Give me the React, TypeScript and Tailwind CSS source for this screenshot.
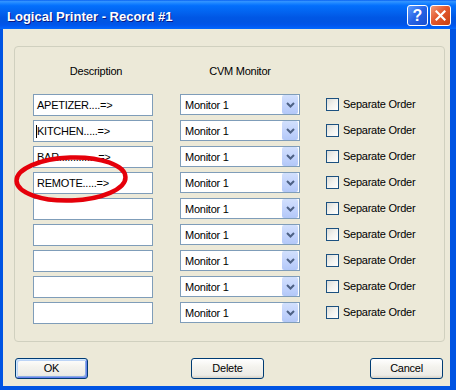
import React from "react";

function Chevron() {
  return (
    <svg width="9" height="6" viewBox="0 0 9 6">
      <polyline points="1,1 4.5,4.5 8,1" fill="none" stroke="#4D6185" strokeWidth="2" />
    </svg>
  );
}

function Button({ label, isDefault, className }: { label: string; isDefault?: boolean; className?: string }) {
  return (
    <div
      className={
        "w-[73px] h-[21px] border border-[#003C74] rounded-[3px] bg-[linear-gradient(to_bottom,#FFFFFF_0%,#F4F3EE_40%,#ECEBE6_85%,#D6D0C5_100%)] flex items-center justify-center text-[11px] tracking-[-0.25px] text-black " +
        (isDefault
          ? "shadow-[inset_1px_1px_0_#CEE7FF,inset_-1px_-1px_0_#6982EE,inset_2px_2px_0_#BCD4F6,inset_-2px_-2px_0_#89ADE4] "
          : "") +
        (className ?? "")
      }
    >
      {label}
    </div>
  );
}

export default function App() {
  const rows = [
    "APETIZER....=>",
    "KITCHEN.....=>",
    "BAR..............=>",
    "REMOTE.....=>",
    "",
    "",
    "",
    "",
    "",
  ];
  return (
    <div className="relative w-[456px] h-[390px] bg-[#0054E3] font-['Liberation_Sans',Arial,sans-serif] overflow-hidden select-none flex flex-col">
      {/* Title bar */}
      <div className="h-[29px] shrink-0 flex items-center pl-[7px] pr-[5px] bg-[linear-gradient(to_bottom,#0058EE_0%,#3593FF_4%,#288EFF_8%,#127DFF_14%,#036FFC_20%,#0262EE_44%,#0057E5_60%,#0054E3_76%,#0055EB_86%,#005BF5_92%,#026AFE_100%)]">
        <span className="pt-[4px] text-[13px] font-bold text-white [text-shadow:1px_1px_0_#0A1883] leading-none">
          Logical Printer - Record #1
        </span>
        <div className="ml-auto flex items-center gap-[2px] mt-[2px]">
          <div className="w-[21px] h-[21px] rounded-[3px] border border-white bg-[linear-gradient(135deg,#5C9BFF_0%,#2663E5_50%,#1A4FD0_100%)] flex items-center justify-center text-white font-bold text-[16px] leading-none">
            ?
          </div>
          <div className="w-[21px] h-[21px] rounded-[3px] border border-white bg-[linear-gradient(135deg,#F29B7A_0%,#E3582E_45%,#C8400F_100%)] flex items-center justify-center">
            <svg width="11" height="11" viewBox="0 0 11 11">
              <path d="M1.5 1.5 L9.5 9.5 M9.5 1.5 L1.5 9.5" stroke="white" strokeWidth="2.2" strokeLinecap="square" />
            </svg>
          </div>
        </div>
      </div>

      {/* Body */}
      <div className="flex-1 ml-[3px] mr-[6px] mb-[4px] bg-[#ECE9D8] flex flex-col text-[11px] tracking-[-0.25px] text-black">
        {/* Group box */}
        <div className="mt-[17px] ml-[11px] w-[431px] h-[296px] border border-[#D0D0BF] rounded-[4px] pt-[17px] pl-[18px]">
          <div className="flex h-[14px] leading-[14px]">
            <div className="w-[120px] pl-[6px] text-center">Description</div>
            <div className="w-[120px] ml-[27px] text-center">CVM Monitor</div>
          </div>
          <div className="mt-[16px] flex flex-col gap-[4px]">
            {rows.map((r, i) => (
              <div key={i} className="flex items-start h-[22px]">
                <div className="relative w-[120px] h-[22px] border border-[#7F9DB9] bg-white pl-[3px] leading-[20px] whitespace-nowrap overflow-hidden">
                  {i === 1 && <span className="absolute left-[2px] top-[4px] w-px h-[13px] bg-black" />}
                  {r}
                </div>
                <div className="ml-[27px] w-[120px] h-[21px] border border-[#7F9DB9] bg-white flex items-center pl-[4px] pr-px">
                  <span className="flex-1 leading-[19px] pt-px">Monitor 1</span>
                  <div className="w-[16px] h-[19px] rounded-[2px] bg-[linear-gradient(to_bottom,#D2E0FD_0%,#C3D4FC_50%,#B3C8F8_100%)] flex items-center justify-center">
                    <Chevron />
                  </div>
                </div>
                <div className="ml-[26px] h-[21px] flex items-center">
                  <div className="w-[13px] h-[13px] border border-[#1C5180] bg-[linear-gradient(135deg,#DCDCD7_0%,#F2F2EE_50%,#FFFFFF_100%)]" />
                  <span className="ml-[4px]">Separate Order</span>
                </div>
              </div>
            ))}
          </div>
        </div>

        {/* Buttons */}
        <div className="mt-[16px] flex">
          <Button label="OK" isDefault className="ml-[12px]" />
          <Button label="Delete" className="ml-[103px]" />
          <Button label="Cancel" className="ml-[106px]" />
        </div>
      </div>

      {/* Red annotation ellipse */}
      <svg className="absolute left-0 top-0 pointer-events-none" width="456" height="390" viewBox="0 0 456 390">
        <ellipse cx="71" cy="179" rx="54.5" ry="21.5" fill="none" stroke="#E5000A" strokeWidth="4.5" transform="rotate(-2 71 179)" />
      </svg>
    </div>
  );
}
